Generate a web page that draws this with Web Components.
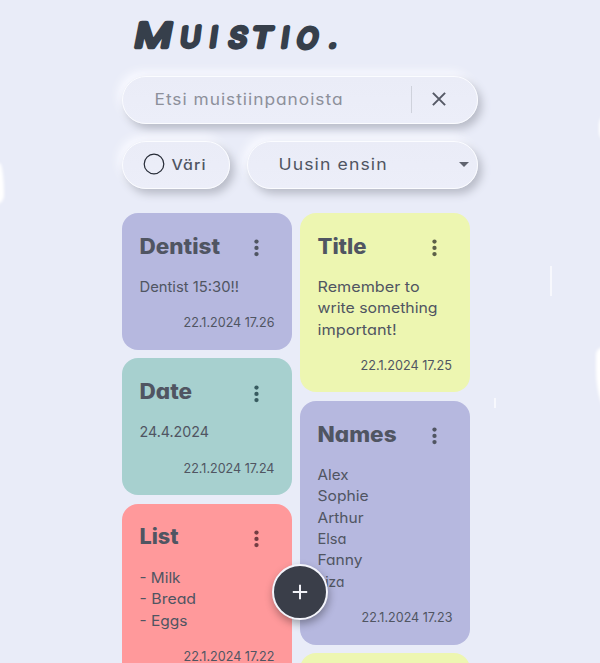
<!DOCTYPE html>
<html lang="fi"><head><meta charset="utf-8"><title>Muistio</title>
<style>
html,body{margin:0;height:100%;overflow:hidden;background:#e9ecf8}
body{font-family:Inter,"Open Sans",sans-serif;font-feature-settings:"cv11","ss03";color:#505562}
</style></head><body>
<memo-app></memo-app>
<script>
const define=(name,html,init)=>customElements.define(name,class extends HTMLElement{
  constructor(){super();this.attachShadow({mode:'open'}).innerHTML=html;}
  connectedCallback(){if(init)init.call(this,this.shadowRoot);}
});

/* A line of text widened so that it fills the width given in "w" */
define('fit-text',`<style>:host{display:block;white-space:pre}span{display:inline-block;transform-origin:0 50%}</style><span><slot></slot></span>`,function(root){
  const s=root.querySelector('span'),w=+this.getAttribute('w');
  this.style.width=w+'px';
  const natural=s.getBoundingClientRect().width-(parseFloat(getComputedStyle(this).letterSpacing)||0)-1;
  if(natural>0)s.style.transform=`translateX(-.5px) scaleX(${w/natural})`;
});

define('memo-logo',`<style>:host{display:block;width:230px;height:75px}svg{display:block}
text{font-family:Inter,sans-serif;font-weight:300;fill:#363f4b;stroke:#363f4b;stroke-width:4.7;stroke-linejoin:round;stroke-linecap:round;text-transform:uppercase}
</style><svg width="230" height="75"><g transform="translate(11 47.3) skewX(-11)"><text><tspan font-size="33" x="0" textLength="37" lengthAdjust="spacingAndGlyphs">M</tspan><tspan font-size="27" x="46.500 76" y="0 -.5" rotate="-4 -3">ui</tspan><tspan font-size="27" x="94.5" y="0" textLength="18" lengthAdjust="spacingAndGlyphs">s</tspan><tspan font-size="27" x="117.5" y="-.5" textLength="20" lengthAdjust="spacingAndGlyphs">t</tspan><tspan font-size="27" x="147.500 162 195.500" y="0 -.5 0" rotate="-3 6 0">io.</tspan></text></g></svg>`);

define('soft-pill',`<style>:host{display:flex;align-items:center;box-sizing:border-box;height:48px;border-radius:24px;border:1px solid #fbfcff;background:linear-gradient(#eaecf7,#eceef9);box-shadow:4px 5px 8px #b9bcc8,-4px -5px 8px #f8f9ff}</style><slot></slot>`);

define('memo-search',`<style>:host{display:block}fit-text{font-size:16px;letter-spacing:.9px;color:#8d909b;margin:-2px 0 0 32px}
i{width:1px;height:27px;background:#cfd2dc;margin-left:69px}svg{margin:-1px 0 0 20px}</style>
<soft-pill><fit-text w="187">Etsi muistiinpanoista</fit-text><i></i><svg width="14" height="14" viewBox="0 0 14 14"><path d="M.9.9 13.1 13.1M13.1.9.9 13.1" stroke="#555965" stroke-width="2"/></svg></soft-pill>`);

define('memo-filters',`<style>:host{display:flex;gap:17px}.a{width:108px}.b{width:231px}
.a svg{margin:-1px 0 0 20.4px}.a fit-text{font-size:14.5px;letter-spacing:1px;font-weight:500;margin:-1px 0 0 7px}
.b fit-text{font-size:16px;letter-spacing:1px;margin:-1px 0 0 31px}.b svg{margin-left:auto;margin-right:8px}</style>
<soft-pill class="a"><svg width="22" height="22"><circle cx="11" cy="11" r="9.8" fill="none" stroke="#252a35" stroke-width="1.2"/></svg><fit-text w="33">Väri</fit-text></soft-pill>
<soft-pill class="b"><fit-text w="107">Uusin ensin</fit-text><svg width="10" height="5"><path d="M0 0H10L5 5Z" fill="#60646f"/></svg></soft-pill>`);

define('memo-card',`<style>:host{display:block;box-sizing:border-box;padding:18px 17.5px 17.5px;border-radius:16px;background:var(--c)}
header{display:flex;height:30px;align-items:center;justify-content:space-between}
svg{margin:4.5px 15.5px 0 0}
.body{padding-top:16px;font-size:14.6px}
.date{display:flex;justify-content:flex-end;margin-top:14px;margin-right:1px;height:20px;line-height:20px;font-size:13.4px}
::slotted([slot=title]){font-size:21px;font-weight:800;line-height:31px}
::slotted(fit-text:not([slot])){line-height:21.33px}
</style><header><slot name="title"></slot><svg width="5" height="18"><g fill="var(--d,#505562)"><circle cx="2.5" cy="2.6" r="2.15"/><circle cx="2.5" cy="8.9" r="2.15"/><circle cx="2.5" cy="15.1" r="2.15"/></g></svg></header>
<div class="body"><slot></slot></div><div class="date"><slot name="date"></slot></div>`);

define('add-button',`<style>:host{display:grid;place-items:center;box-sizing:border-box;width:56px;height:56px;border-radius:50%;border:2px solid #f3f4fb;background:#3a3e49;box-shadow:1px 4px 8px #0005}</style><svg width="16" height="16"><path d="M8 .8V15.2M.8 8H15.2" stroke="#f1f2f8" stroke-width="2"/></svg>`);

/* White highlights scattered over the backdrop */
define('light-spots',`<style>:host{position:absolute;inset:0;overflow:hidden;pointer-events:none}
i{position:absolute;background:#fff}
</style><i style="left:-20px;top:163px;width:24px;height:43px;border-radius:0 5px 14px 0/0 36px 12px 0;filter:blur(1.5px)"></i>
<i style="left:598.5px;top:114px;width:20px;height:28px;border-radius:12px;filter:blur(1.5px)"></i>
<i style="left:595.5px;top:347px;width:20px;height:72px;border-radius:8px 0 0 20px/8px 0 0 50px;filter:blur(1.5px)"></i>
<i style="left:550px;top:266px;width:1.5px;height:30px;opacity:.65"></i>
<i style="left:494px;top:398px;width:1.5px;height:10px;opacity:.65"></i>`);

define('memo-app',`<style>:host{display:block;position:relative;height:663px;overflow:hidden}
main{width:356px;margin-left:122px}
memo-search{margin-top:.5px}memo-filters{margin-top:17px}
.grid{display:grid;grid-template-columns:170px 170px;gap:8px;margin-top:24.5px;align-items:start}
.col{display:grid;gap:8.6px}
.p{--c:#b6b8df}.y{--c:#edf6b1;--d:#5c6048}.t{--c:#a7d0cf;--d:#385b60}.r{--c:#ff999b;--d:#723d43}
add-button{position:absolute;left:272px;top:564px}</style>
<light-spots></light-spots>
<main><memo-logo></memo-logo><memo-search></memo-search><memo-filters></memo-filters>
<div class="grid"><div class="col">
<memo-card class="p"><fit-text slot="title" w="79.5">Dentist</fit-text><fit-text w="98.5">Dentist 15:30!!</fit-text><fit-text slot="date" w="90">22.1.2024 17.26</fit-text></memo-card>
<memo-card class="t"><fit-text slot="title" w="51.5">Date</fit-text><fit-text w="68.5">24.4.2024</fit-text><fit-text slot="date" w="90">22.1.2024 17.24</fit-text></memo-card>
<memo-card class="r"><fit-text slot="title" w="38">List</fit-text><fit-text w="40">- Milk</fit-text><fit-text w="55.5">- Bread</fit-text><fit-text w="47">- Eggs</fit-text><fit-text slot="date" w="90">22.1.2024 17.22</fit-text></memo-card>
</div><div class="col">
<memo-card class="y"><fit-text slot="title" w="48">Title</fit-text><fit-text w="101">Remember to</fit-text><fit-text w="119">write something</fit-text><fit-text w="78">important!</fit-text><fit-text slot="date" w="90.5">22.1.2024 17.25</fit-text></memo-card>
<memo-card class="p"><fit-text slot="title" w="78">Names</fit-text><fit-text w="30">Alex</fit-text><fit-text w="50">Sophie</fit-text><fit-text w="45">Arthur</fit-text><fit-text w="28">Elsa</fit-text><fit-text w="44">Fanny</fit-text><fit-text w="26">Liza</fit-text><fit-text slot="date" w="90">22.1.2024 17.23</fit-text></memo-card>
<memo-card class="y"></memo-card>
</div></div></main><add-button></add-button>`);
</script></body></html>
